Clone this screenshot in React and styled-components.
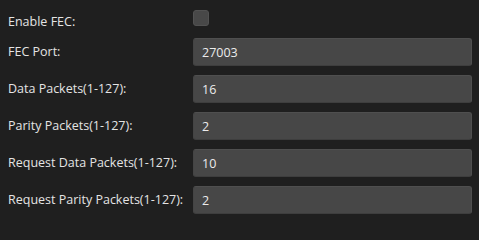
import React from "react";
import styled, { createGlobalStyle } from "styled-components";

const GlobalStyle = createGlobalStyle`
  html, body {
    margin: 0;
    padding: 0;
    background: #1f1f1f;
  }
`;

const Form = styled.div`
  width: 479px;
  height: 220px;
  box-sizing: border-box;
  padding: 0 7px 0 8px;
  display: flex;
  flex-direction: column;
  gap: 9px;
  background: #1f1f1f;
  font-family: "Open Sans", "Noto Sans", sans-serif;
  font-size: 12.5px;
  color: #e4e4e4;
`;

const Row = styled.div`
  display: grid;
  grid-template-columns: 185px 1fr;
  align-items: center;
  height: ${(p) => (p.$check ? "29px" : "28px")};
  ${(p) => p.$check && "align-items: start;"}
`;

const Label = styled.label`
  line-height: 16px;
  white-space: nowrap;
  ${(p) => p.$check && "padding-top: 14px;"}
`;

const Checkbox = styled.span`
  display: block;
  width: 16px;
  height: 16px;
  margin-top: 10px;
  box-sizing: border-box;
  border-radius: 3px;
  background: #484848;
  border: 1px solid #525252;
`;

const Field = styled.input`
  box-sizing: border-box;
  width: 100%;
  height: 28px;
  margin: 0;
  padding: 0 8px;
  border: 1px solid #4f4f4f;
  border-left-color: #444;
  border-bottom-color: #3e3e3e;
  border-radius: 3px;
  background: #474747;
  color: #ececec;
  font-family: "Open Sans", "Noto Sans", sans-serif;
  font-size: 12.5px;
  outline: none;
`;

const fields = [
  { label: "FEC Port:", value: "27003" },
  { label: "Data Packets(1-127):", value: "16" },
  { label: "Parity Packets(1-127):", value: "2" },
  { label: "Request Data Packets(1-127):", value: "10" },
  { label: "Request Parity Packets(1-127):", value: "2" },
];

export default function App() {
  return (
    <>
      <GlobalStyle />
      <Form>
        <Row $check>
          <Label $check>Enable FEC:</Label>
          <Checkbox />
        </Row>
        {fields.map((f) => (
          <Row key={f.label}>
            <Label>{f.label}</Label>
            <Field defaultValue={f.value} />
          </Row>
        ))}
      </Form>
    </>
  );
}
